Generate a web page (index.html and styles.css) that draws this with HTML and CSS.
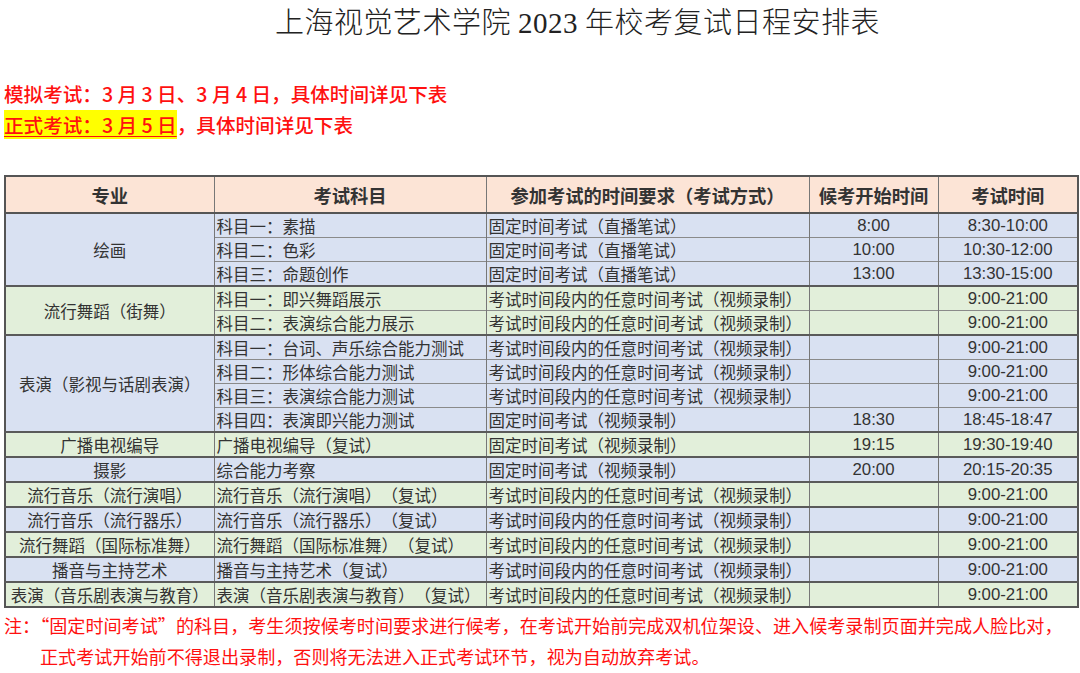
FILE: index.html
```html
<!DOCTYPE html>
<html lang="zh">
<head>
<meta charset="utf-8">
<link rel="stylesheet" href="styles.css">
</head>
<body>
<div class="page">
  <h1 class="title">上海视觉艺术学院 <span class="num">2023</span> 年校考复试日程安排表</h1>
  <div class="notice">
    <p class="line">模拟考试：3 月 3 日、3 月 4 日，具体时间详见下表</p>
    <p class="line"><span class="hl">正式考试：3 月 5 日</span>，具体时间详见下表</p>
  </div>
  <table class="sched">
    <colgroup>
      <col class="c1"><col class="c2"><col class="c3"><col class="c4"><col class="c5">
    </colgroup>
    <thead>
      <tr><th>专业</th><th>考试科目</th><th>参加考试的时间要求（考试方式）</th><th>候考开始时间</th><th>考试时间</th></tr>
    </thead>
    <tbody>
      <tr class="b g"><td class="m" rowspan="3">绘画</td><td>科目一：素描</td><td>固定时间考试（直播笔试）</td><td class="n">8:00</td><td class="n">8:30-10:00</td></tr>
      <tr class="b"><td>科目二：色彩</td><td>固定时间考试（直播笔试）</td><td class="n">10:00</td><td class="n">10:30-12:00</td></tr>
      <tr class="b"><td>科目三：命题创作</td><td>固定时间考试（直播笔试）</td><td class="n">13:00</td><td class="n">13:30-15:00</td></tr>

      <tr class="gr g"><td class="m" rowspan="2">流行舞蹈（街舞）</td><td>科目一：即兴舞蹈展示</td><td>考试时间段内的任意时间考试（视频录制）</td><td class="n"></td><td class="n">9:00-21:00</td></tr>
      <tr class="gr"><td>科目二：表演综合能力展示</td><td>考试时间段内的任意时间考试（视频录制）</td><td class="n"></td><td class="n">9:00-21:00</td></tr>

      <tr class="b g"><td class="m" rowspan="4">表演（影视与话剧表演）</td><td>科目一：台词、声乐综合能力测试</td><td>考试时间段内的任意时间考试（视频录制）</td><td class="n"></td><td class="n">9:00-21:00</td></tr>
      <tr class="b"><td>科目二：形体综合能力测试</td><td>考试时间段内的任意时间考试（视频录制）</td><td class="n"></td><td class="n">9:00-21:00</td></tr>
      <tr class="b"><td>科目三：表演综合能力测试</td><td>考试时间段内的任意时间考试（视频录制）</td><td class="n"></td><td class="n">9:00-21:00</td></tr>
      <tr class="b"><td>科目四：表演即兴能力测试</td><td>固定时间考试（视频录制）</td><td class="n">18:30</td><td class="n">18:45-18:47</td></tr>

      <tr class="gr g"><td class="m">广播电视编导</td><td>广播电视编导（复试）</td><td>固定时间考试（视频录制）</td><td class="n">19:15</td><td class="n">19:30-19:40</td></tr>
      <tr class="b g"><td class="m">摄影</td><td>综合能力考察</td><td>固定时间考试（视频录制）</td><td class="n">20:00</td><td class="n">20:15-20:35</td></tr>
      <tr class="gr g"><td class="m">流行音乐（流行演唱）</td><td>流行音乐（流行演唱）（复试）</td><td>考试时间段内的任意时间考试（视频录制）</td><td class="n"></td><td class="n">9:00-21:00</td></tr>
      <tr class="b g"><td class="m">流行音乐（流行器乐）</td><td>流行音乐（流行器乐）（复试）</td><td>考试时间段内的任意时间考试（视频录制）</td><td class="n"></td><td class="n">9:00-21:00</td></tr>
      <tr class="gr g"><td class="m">流行舞蹈（国际标准舞）</td><td>流行舞蹈（国际标准舞）（复试）</td><td>考试时间段内的任意时间考试（视频录制）</td><td class="n"></td><td class="n">9:00-21:00</td></tr>
      <tr class="b g"><td class="m">播音与主持艺术</td><td>播音与主持艺术（复试）</td><td>考试时间段内的任意时间考试（视频录制）</td><td class="n"></td><td class="n">9:00-21:00</td></tr>
      <tr class="gr g"><td class="m">表演（音乐剧表演与教育）</td><td>表演（音乐剧表演与教育）（复试）</td><td>考试时间段内的任意时间考试（视频录制）</td><td class="n"></td><td class="n">9:00-21:00</td></tr>
    </tbody>
  </table>
  <div class="note">
    <p class="n1">注：“固定时间考试”的科目，考生须按候考时间要求进行候考，在考试开始前完成双机位架设、进入候考录制页面并完成人脸比对，</p>
    <p class="n2">正式考试开始前不得退出录制，否则将无法进入正式考试环节，视为自动放弃考试。</p>
  </div>
</div>
</body>
</html>
```

FILE: styles.css
```css
html, body {
  margin: 0;
  padding: 0;
  background: #ffffff;
}
body {
  font-family: "Noto Sans CJK SC", "Noto Sans", sans-serif;
  color: #333333;
  text-spacing-trim: space-all;
}
.page {
  width: 1080px;
  height: 673px;
  overflow: hidden;
}
.title {
  margin: 0;
  padding: 3px 0 0 75px;
  height: 38px;
  text-align: center;
  font-size: 29px;
  line-height: 34px;
  font-weight: 300;
  color: #222222;
  letter-spacing: 0.5px;
}
.title .num {
  font-family: "Liberation Serif", serif;
  font-weight: 400;
}
.notice {
  padding: 37px 0 0 4px;
  height: 92px;
  box-sizing: border-box;
}
.line {
  margin: 0;
  font-size: 19.6px;
  line-height: 31px;
  font-weight: 500;
  color: #ff1010;
  white-space: nowrap;
}
.hl {
  background: #ffff00;
  text-decoration: underline;
  text-underline-offset: 3px;
  text-decoration-thickness: 1px;
}
.sched {
  margin: 42px 0 0 4px;
  width: 1073px;
  border-collapse: collapse;
  table-layout: fixed;
  border: 2px solid #555555;
  font-size: 16.5px;
}
.c1 { width: 209px; }
.c2 { width: 272px; }
.c3 { width: 323px; }
.c4 { width: 129px; }
.c5 { width: 140px; }
.sched th {
  background: #fce4d6;
  height: 35px;
  font-size: 18.3px;
  font-weight: 700;
  color: #333333;
  border: 1px solid #777777;
  border-bottom: 2px solid #555555;
  padding: 0;
  text-align: center;
  white-space: nowrap;
}
.sched td {
  height: 23px;
  padding: 0 0 0 2px;
  border-left: 1px solid #777777;
  border-right: 1px solid #777777;
  border-top: 1px solid #8a8a8a;
  line-height: 20px;
  white-space: nowrap;
  overflow: hidden;
  color: #333333;
}
.sched tr.g td {
  border-top: 2px solid #5a5a5a;
}
.sched td.m {
  text-align: center;
  padding: 0;
}
.sched td.n {
  text-align: center;
  padding: 0;
  font-size: 16.8px;
  font-family: "Liberation Sans", "Noto Sans CJK SC", sans-serif;
}
.b td { background: #d9e1f2; }
.gr td { background: #e2efda; }
.note {
  padding: 2px 0 0 4px;
  color: #ff1010;
  font-size: 18.1px;
  text-spacing-trim: normal;
}
.note p {
  margin: 0;
  line-height: 31px;
  white-space: nowrap;
}
.n2 {
  padding-left: 36px;
}
```
